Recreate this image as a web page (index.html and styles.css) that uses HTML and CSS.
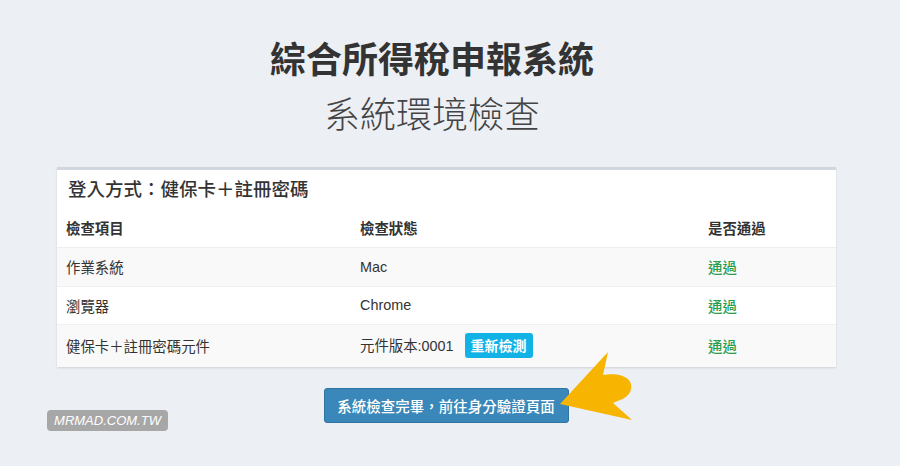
FILE: index.html
```html
<!DOCTYPE html>
<html lang="zh-Hant">
<head>
<meta charset="utf-8">
<link rel="stylesheet" href="styles.css">
</head>
<body>
<div class="page">
  <header class="heading">
    <h1 class="title">綜合所得稅申報系統</h1>
    <h2 class="subtitle">系統環境檢查</h2>
  </header>
  <section class="card">
    <div class="card-header">登入方式：健保卡＋註冊密碼</div>
    <table class="check-table">
      <thead>
        <tr><th class="c1">檢查項目</th><th class="c2">檢查狀態</th><th class="c3">是否通過</th></tr>
      </thead>
      <tbody>
        <tr class="odd"><td>作業系統</td><td>Mac</td><td class="pass">通過</td></tr>
        <tr class="even"><td>瀏覽器</td><td>Chrome</td><td class="pass">通過</td></tr>
        <tr class="odd tall"><td>健保卡＋註冊密碼元件</td><td>元件版本:0001 <span class="label">重新檢測</span></td><td class="pass">通過</td></tr>
      </tbody>
    </table>
  </section>
  <div class="actions">
    <button class="btn-primary">系統檢查完畢，前往身分驗證頁面</button>
  </div>
  <svg class="arrow" width="90" height="80" viewBox="0 0 90 80">
    <path d="M2 56 L50 4 L45 27 C52 26 62 25 70 31 C76 37 74 48 62 52 L55 55 L74 72 Z" fill="#f7b400"/>
  </svg>
  <div class="watermark">MRMAD.COM.TW</div>
</div>
</body>
</html>
```
FILE: styles.css
```css
* { box-sizing: border-box; }
html, body { margin: 0; padding: 0; }
body {
  background: #eceff4;
  font-family: "Liberation Sans", "Noto Sans CJK TC", sans-serif;
  color: #333;
  width: 900px;
  height: 466px;
  overflow: hidden;
}
.page {
  position: relative;
  height: 466px;
  padding-top: 34px;
}
.heading {
  text-align: center;
  padding-right: 36px;
  font-family: "Noto Sans CJK TC", sans-serif;
}
.title {
  margin: 0;
  font-size: 36px;
  font-weight: 700;
  line-height: 46px;
  color: #333;
}
.subtitle {
  margin: 9px 0 0;
  font-size: 36px;
  font-weight: 300;
  line-height: 46px;
  color: #444;
}
.card {
  width: 779px;
  margin: 32px 0 0 57px;
  background: #fff;
  border-top: 3px solid #d2d6de;
  box-shadow: 0 1px 2px rgba(0,0,0,0.12);
}
.card-header {
  padding: 6px 11px 4px;
  font-size: 18.5px;
  font-weight: 500;
  line-height: 28px;
  color: #333;
}
.check-table {
  width: 100%;
  border-collapse: collapse;
  font-size: 14.4px;
}
.check-table th, .check-table td {
  text-align: left;
  padding: 0 9px;
  height: 39px;
  border-top: 1px solid #f0f0f0;
  vertical-align: middle;
}
.check-table th {
  font-family: "Noto Sans CJK TC", sans-serif;
  font-weight: 700;
  height: 39px;
  border-top: none;
  border-bottom: 1px solid #eeeeee;
}
.check-table .c1 { width: 294px; }
.check-table .c2 { width: 348px; }
.check-table tr.odd td { background: #f9f9f9; }
.check-table tr.even td { height: 38px; }
.check-table tr.tall td { height: 43px; }
.pass { color: #2a9d4f; font-weight: 500; }
.label {
  display: inline-block;
  margin-left: 7px;
  padding: 0 6px;
  background: #12b1e6;
  color: #fff;
  font-family: "Noto Sans CJK TC", sans-serif;
  font-weight: 700;
  font-size: 14px;
  line-height: 25px;
  border-radius: 3px;
}
.actions {
  display: flex;
  justify-content: center;
  margin-top: 21px;
  padding-right: 8px;
}
.btn-primary {
  font-family: "Noto Sans CJK TC", sans-serif;
  font-size: 14.5px;
  font-weight: 500;
  color: #fff;
  background: #3a87b9;
  border: 1px solid #2f75a3;
  border-radius: 3px;
  padding: 0 10px;
  height: 35px;
  width: 245px;
}
.arrow {
  position: absolute;
  left: 558px;
  top: 348px;
}
.watermark {
  position: absolute;
  left: 47px;
  top: 410px;
  width: 121px;
  height: 21px;
  background: #a7a7a7;
  border-radius: 4px;
  color: #fff;
  font-family: "Liberation Sans", sans-serif;
  font-style: italic;
  font-size: 13px;
  line-height: 21px;
  text-align: center;
}
```
